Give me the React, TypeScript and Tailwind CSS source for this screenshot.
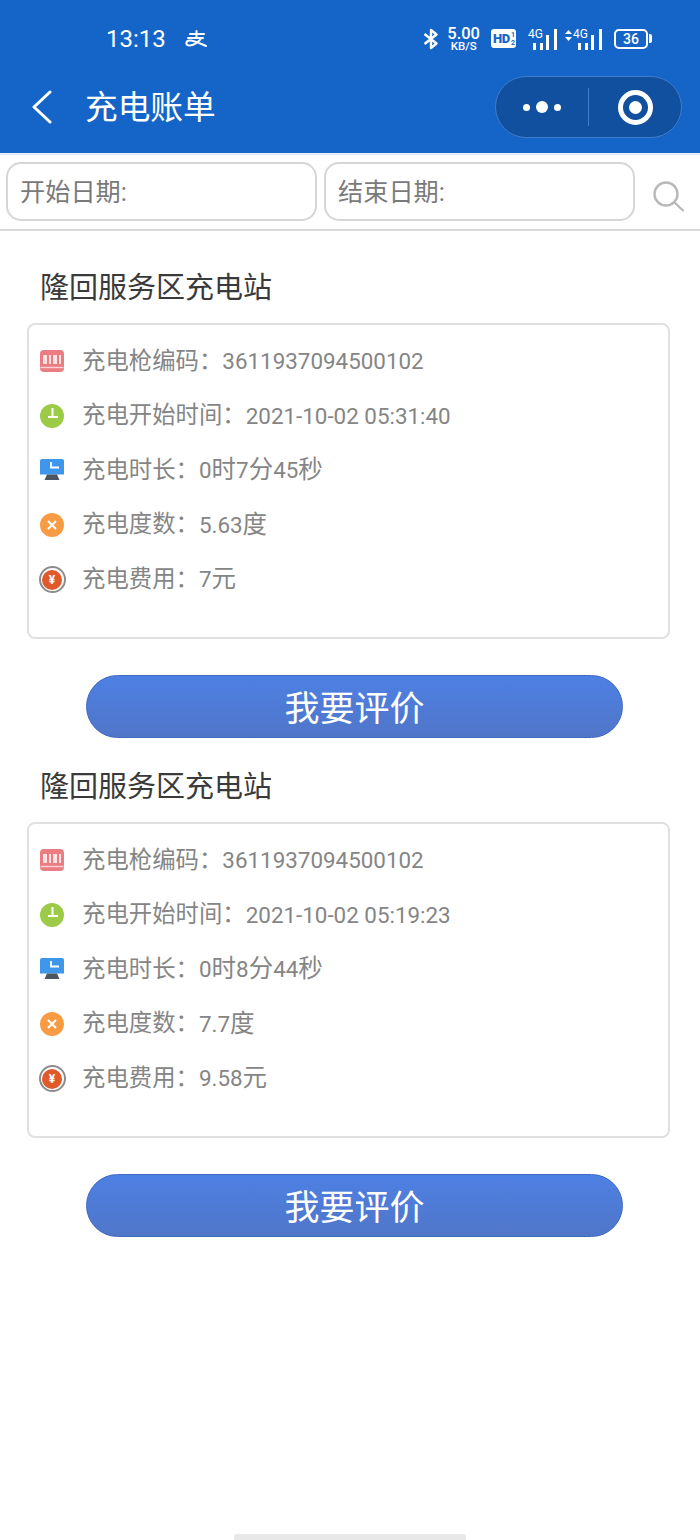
import { ReactNode } from "react";

const FONT = "font-['Roboto','Noto_Sans_CJK_SC',sans-serif]";

function AlipayGlyph() {
  return (
    <svg width="22" height="17" viewBox="0 0 22 17" fill="none" stroke="white" strokeWidth="2" strokeLinecap="round">
      <path d="M5 4 H19" />
      <path d="M11.5 1 V8" />
      <path d="M3 8 H18" />
      <path d="M16 8.5 C14 12 8 15.5 4.5 15.5 C0 15.5 0.5 10.5 5 10.5 C10 10.5 16 14 21 16" />
    </svg>
  );
}

function Bluetooth() {
  return (
    <svg width="16" height="22" viewBox="0 0 16 22" fill="none" stroke="white" strokeWidth="2.4" strokeLinejoin="round">
      <path d="M1.5 6 L13.5 15.5 L8 20 V2 L13.5 6.5 L1.5 16" />
    </svg>
  );
}

function Signal({ arrows }: { arrows?: boolean }) {
  return (
    <div className="flex items-end h-[22px]">
      {arrows && (
        <svg width="7" height="11" viewBox="0 0 7 11" fill="white" className="mb-[9px] mr-[1px]">
          <path d="M3.5 0 L7 4 H0 Z" />
          <path d="M3.5 11 L7 7 H0 Z" />
        </svg>
      )}
      <div className="relative w-[29px] h-[22px]">
        <span className="absolute left-0 top-0 text-[12px] leading-[12px] text-white">4G</span>
        <svg width="29" height="22" viewBox="0 0 29 22" fill="white">
          <rect x="5" y="15" width="3" height="7" />
          <rect x="12" y="15" width="3" height="7" />
          <rect x="18" y="7" width="3" height="15" />
          <rect x="26" y="1" width="3" height="21" />
        </svg>
      </div>
    </div>
  );
}

function StatusBar() {
  return (
    <div className="flex items-center h-[76px] pl-[106px] pr-[48px] pt-[1px] text-white">
      <span className="text-[24px] leading-none">13:13</span>
      <div className="ml-[19px]">
        <AlipayGlyph />
      </div>
      <div className="ml-auto flex items-center">
        <Bluetooth />
        <div className="ml-[8px] flex flex-col items-center">
          <span className="text-[16.5px] leading-[15px] font-medium">5.00</span>
          <span className="text-[11.5px] leading-[10px] font-medium">KB/S</span>
        </div>
        <div className="ml-[11px] flex items-center justify-between w-[25px] h-[19px] rounded-[3px] bg-white pl-[2px] pr-[1px]">
          <span className="text-[13px] leading-none font-black tracking-[-0.5px] text-[#1565c9]">HD</span>
          <span className="flex flex-col text-[7px] leading-[8px] font-bold text-[#1565c9]">
            <span>1</span>
            <span>2</span>
          </span>
        </div>
        <div className="ml-[12px]">
          <Signal />
        </div>
        <div className="ml-[8px]">
          <Signal arrows />
        </div>
        <div className="ml-[12px] flex items-center">
          <div className="flex items-center justify-center w-[34px] h-[20px] rounded-[5px] border-2 border-white">
            <span className="text-[14px] leading-none font-medium">36</span>
          </div>
          <div className="ml-[1px] w-[3px] h-[9px] rounded-r-[2px] bg-white" />
        </div>
      </div>
    </div>
  );
}

function NavBar() {
  return (
    <div className="flex items-center h-[77px] pl-[30px] pr-[18px] pb-[15px] text-white">
      <svg width="24" height="34" viewBox="0 0 24 34" fill="none" stroke="white" strokeWidth="3" strokeLinecap="round" strokeLinejoin="round">
        <path d="M20 2 L4 17 L20 32" />
      </svg>
      <span className="ml-[31px] mt-[3px] text-[32.7px] leading-none">充电账单</span>
      <div className="ml-auto flex items-center w-[187px] h-[62px] rounded-full bg-[#10509f] border border-[#3f7ccb]">
        <div className="flex items-center justify-center gap-[6px] w-[92px]">
          <span className="size-[7px] rounded-full bg-white" />
          <span className="size-[12px] rounded-full bg-white" />
          <span className="size-[7px] rounded-full bg-white" />
        </div>
        <div className="w-px h-[38px] bg-[#3f7ccb]" />
        <div className="flex items-center justify-center flex-1 pl-[1px]">
          <div className="flex items-center justify-center size-[35px] rounded-full border-[5px] border-white">
            <span className="size-[13px] rounded-full bg-white" />
          </div>
        </div>
      </div>
    </div>
  );
}

function DateField({ label }: { label: string }) {
  return (
    <div className="flex items-center w-[311px] h-[59px] rounded-[15px] border-2 border-[#d6d6d6] pl-[12px] pt-[2px] text-[25.2px] text-[#7a7a7a]">
      {label}
    </div>
  );
}

function FilterRow() {
  return (
    <div className="flex items-center gap-[7px] h-[78px] pl-[6px] pb-[1px] border-t-2 border-t-[#e3edf7] border-b-2 border-b-[#d9d9d9]">
      <DateField label="开始日期:" />
      <DateField label="结束日期:" />
      <svg className="ml-[11px] mt-[10px]" width="31" height="31" viewBox="0 0 31 31" fill="none" stroke="#b8b8b8" strokeWidth="2.4" strokeLinecap="round">
        <circle cx="13" cy="13" r="11.5" />
        <path d="M21.5 21.5 L30 29.5" />
      </svg>
    </div>
  );
}

function BarcodeIcon() {
  return (
    <svg width="24" height="22" viewBox="0 0 24 22">
      <rect x="0" y="0" width="24" height="22" rx="4" fill="#ea7c82" />
      <path d="M0.5 17.5 H23.5" stroke="#f8d2d4" strokeWidth="1.4" />
      <rect x="3" y="5" width="4" height="9" fill="#fbe3e3" />
      <rect x="9" y="5" width="2" height="9" fill="#fbe3e3" />
      <rect x="13" y="5" width="4" height="9" fill="#fbe3e3" />
      <rect x="19" y="5" width="2" height="9" fill="#fbe3e3" />
    </svg>
  );
}

function ClockIcon() {
  return (
    <svg width="24" height="24" viewBox="0 0 24 24">
      <circle cx="12" cy="12" r="12" fill="#9ccb48" />
      <path d="M12.5 4 V14 M8 13 H18" fill="none" stroke="white" strokeWidth="2" />
    </svg>
  );
}

function MonitorIcon() {
  return (
    <svg width="24" height="22" viewBox="0 0 24 22">
      <path d="M0 2 a2 2 0 0 1 2 -2 H22 a2 2 0 0 1 2 2 V15.5 H0 Z" fill="#3f97ec" />
      <path d="M11 3 V8.5 H19" fill="none" stroke="white" strokeWidth="1.8" />
      <path d="M7 15.5 H17 L19.5 21 H4.5 Z" fill="#4d5560" />
    </svg>
  );
}

function CrossIcon() {
  return (
    <svg width="24" height="24" viewBox="0 0 24 24">
      <circle cx="12" cy="12" r="12" fill="#f89c44" />
      <path d="M8 8 L16 16 M16 8 L8 16" stroke="white" strokeWidth="2" />
    </svg>
  );
}

function YuanIcon() {
  return (
    <div className="flex items-center justify-center size-[27px] -mx-[1.5px] rounded-full border-2 border-[#8c8c8c]">
      <div className="flex items-center justify-center size-[20px] rounded-full bg-[#e0592a] text-[12px] leading-none font-bold text-white">
        ¥
      </div>
    </div>
  );
}

// units inside a value (时, 分, 度, 元) run a little larger than the digits around them
function Value({ text }: { text: string }) {
  const parts = text.split(/([^\x00-\x7f])/).filter(Boolean);
  return (
    <span className="text-[22.4px] leading-none text-[#858585]">
      {parts.map((part, i) =>
        /[^\x00-\x7f]/.test(part) ? (
          <span key={i} className="text-[24.5px]">
            {part}
          </span>
        ) : (
          part
        )
      )}
    </span>
  );
}

function InfoRow({ icon, label, value }: { icon: ReactNode; label: string; value: string }) {
  return (
    <div className="flex items-center h-[54.6px]">
      <div className="flex items-center justify-center w-[24px]">{icon}</div>
      <span className="ml-[18px] text-[23.4px] leading-none text-[#858585]">{label}：</span>
      <Value text={value} />
    </div>
  );
}

interface Bill {
  station: string;
  gun: string;
  start: string;
  duration: string;
  energy: string;
  cost: string;
}

const BILLS: Bill[] = [
  {
    station: "隆回服务区充电站",
    gun: "3611937094500102",
    start: "2021-10-02 05:31:40",
    duration: "0时7分45秒",
    energy: "5.63度",
    cost: "7元",
  },
  {
    station: "隆回服务区充电站",
    gun: "3611937094500102",
    start: "2021-10-02 05:19:23",
    duration: "0时8分44秒",
    energy: "7.7度",
    cost: "9.58元",
  },
];

function BillCard({ bill }: { bill: Bill }) {
  return (
    <div className="flex flex-col h-[499px]">
      <h2 className="pl-[40px] h-[76px] pt-[19px] text-[29px] leading-[44px] font-normal text-[#3a3a3a]">{bill.station}</h2>
      <div className="mx-[27px] w-[643px] h-[316px] rounded-[8px] border-2 border-[#e0e0e0] pl-[11px] pt-[9px]">
        <InfoRow icon={<BarcodeIcon />} label="充电枪编码" value={bill.gun} />
        <InfoRow icon={<ClockIcon />} label="充电开始时间" value={bill.start} />
        <InfoRow icon={<MonitorIcon />} label="充电时长" value={bill.duration} />
        <InfoRow icon={<CrossIcon />} label="充电度数" value={bill.energy} />
        <InfoRow icon={<YuanIcon />} label="充电费用" value={bill.cost} />
      </div>
      <button className="mt-[36px] ml-[86px] w-[537px] h-[63px] pt-[6px] rounded-full border border-[#3f68bf] bg-gradient-to-b from-[#4d80e4] to-[#5076c8] text-[35px] leading-none text-white">
        我要评价
      </button>
    </div>
  );
}

export default function App() {
  return (
    <div className={`flex flex-col w-[700px] min-h-[1540px] bg-white ${FONT}`}>
      <div className="bg-[#1565c9]">
        <StatusBar />
        <NavBar />
      </div>
      <FilterRow />
      <div className="pt-[16px]">
        {BILLS.map((bill, i) => (
          <BillCard key={i} bill={bill} />
        ))}
      </div>
      <div className="mt-auto mx-auto w-[232px] h-[6px] rounded-t-[3px] bg-[#e8e8e8]" />
    </div>
  );
}
